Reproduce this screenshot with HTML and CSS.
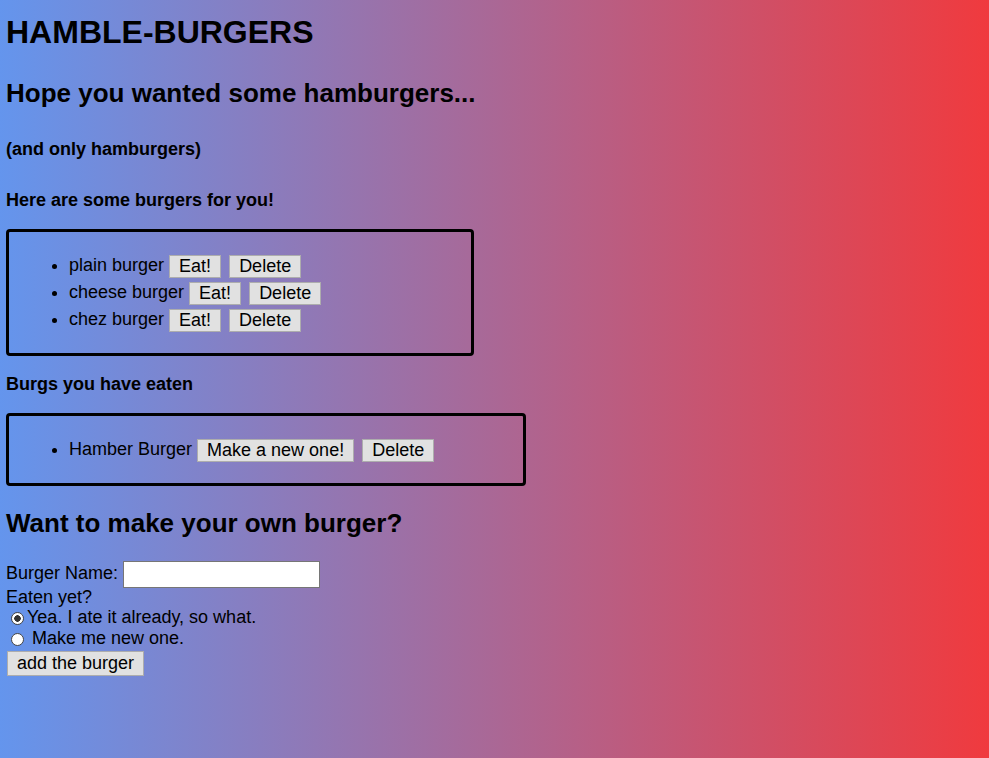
FILE: index.html
```html
<!DOCTYPE html>
<html lang="en">
<head>
<meta charset="utf-8">
<title>Hamble-Burgers</title>
<link rel="stylesheet" href="styles.css">
</head>
<body>
  <h1 class="brand">HAMBLE-BURGERS</h1>
  <h2 class="tagline">Hope you wanted some hamburgers...</h2>
  <h4 class="note">(and only hamburgers)</h4>
  <h4 class="section section--first">Here are some burgers for you!</h4>
  <div class="box box--menu">
    <ul class="burger-list">
      <li>plain burger <button class="btn">Eat!</button> <button class="btn btn--next">Delete</button></li>
      <li>cheese burger <button class="btn">Eat!</button> <button class="btn btn--next">Delete</button></li>
      <li>chez burger <button class="btn">Eat!</button> <button class="btn btn--next">Delete</button></li>
    </ul>
  </div>
  <h4 class="section">Burgs you have eaten</h4>
  <div class="box box--eaten">
    <ul class="burger-list">
      <li>Hamber Burger <button class="btn">Make a new one!</button> <button class="btn btn--next">Delete</button></li>
    </ul>
  </div>
  <h2 class="form-title">Want to make your own burger?</h2>
  <form class="burger-form">
    <div class="name-row">Burger Name: <input class="name-input" type="text"></div>
    <div class="line">Eaten yet?</div>
    <label class="radio-row"><input class="radio" type="radio" name="eaten" checked><span>Yea. I ate it already, so what.</span></label>
    <label class="radio-row"><input class="radio" type="radio" name="eaten"><span class="opt-spaced">Make me new one.</span></label>
    <button class="btn btn--submit" type="button">add the burger</button>
  </form>
</body>
</html>
```
FILE: styles.css
```css
html {
  min-height: 100%;
  background: linear-gradient(to right, #6495ed, #f03a3e);
}

body {
  margin: 0;
  padding: 14px 6px 0;
  font-family: "Liberation Sans", Arial, sans-serif;
  font-size: 18px;
  color: #000;
}

h1, h2, h4 {
  margin: 0;
  font-weight: bold;
  line-height: normal;
}

.brand {
  font-size: 32px;
}

.tagline {
  font-size: 26px;
  margin-top: 27px;
}

.note {
  font-size: 18px;
  margin-top: 30px;
}

.section {
  font-size: 18px;
  margin-top: 18px;
}

.section--first {
  margin-top: 30px;
}

.box {
  margin-top: 18px;
  border: 3px solid #000;
  border-radius: 4px;
  box-sizing: border-box;
}

.box--menu {
  width: 468px;
  margin-top: 18px;
}

.box--eaten {
  width: 520px;
}

.burger-list {
  margin: 20px 0;
  padding-left: 60px;
  list-style: disc;
}

.burger-list li {
  line-height: 27px;
}

.btn {
  font-family: "Liberation Sans", Arial, sans-serif;
  font-size: 18px;
  line-height: 21px;
  color: #000;
  background: #e1e1e1;
  border: 1px solid #adadad;
  border-radius: 0;
  padding: 0 9px;
  margin: 0;
  vertical-align: middle;
}

.btn--next {
  margin-left: 3px;
}

.form-title {
  font-size: 26px;
  margin-top: 22px;
}

.burger-form {
  margin-top: 19px;
}

.name-row {
  height: 30px;
  line-height: 30px;
}

.name-input {
  width: 197px;
  height: 27px;
  box-sizing: border-box;
  border: 1px solid #767676;
  background: #fff;
  padding: 0 2px;
  margin: 0;
  vertical-align: middle;
}

.line {
  line-height: 19px;
}

.radio-row {
  display: flex;
  align-items: center;
  height: 21px;
}

.radio {
  appearance: none;
  -webkit-appearance: none;
  width: 13px;
  height: 13px;
  margin: 1px 3px 0 5px;
  border: 1px solid #444;
  border-radius: 50%;
  background: #fff;
  box-sizing: border-box;
}

.radio:checked {
  background: radial-gradient(circle, #333 0 3px, #fff 3.5px);
}

.opt-spaced {
  margin-left: 5px;
}

.btn--submit {
  margin: 2px 0 0 1px;
  padding: 1px 9px;
  vertical-align: top;
}
```
